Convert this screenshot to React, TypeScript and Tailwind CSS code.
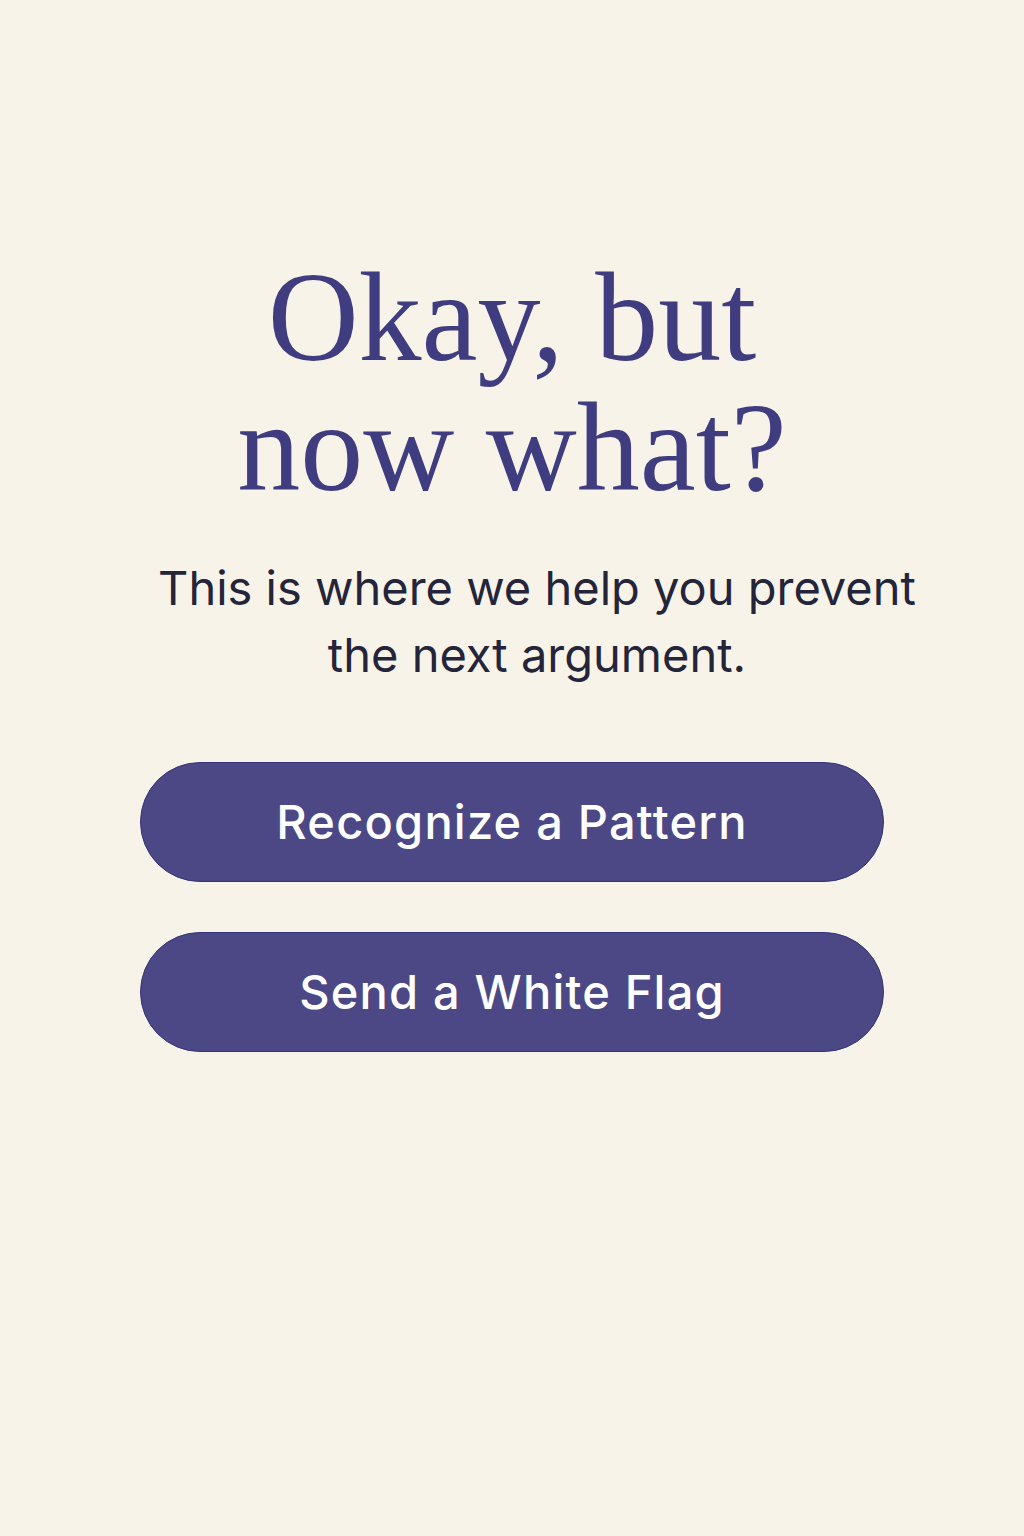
const buttonClass =
  "h-[120px] rounded-[60px] bg-[#4b4885] border border-[#35337a] text-white text-[47px] font-medium tracking-[1.2px] font-['Inter',sans-serif]";

export default function App() {
  return (
    <div className="min-h-[1536px] w-full bg-[#f8f3e8] flex flex-col items-center">
      <h1 className="mt-[253px] text-center text-[126px] leading-[130px] text-[#3f3d80] font-['Liberation_Serif',serif]">
        Okay, but
        <br />
        now what?
      </h1>

      <p className="mt-[41px] pl-[50px] text-center text-[47px] leading-[67px] text-[#24243a] font-['Inter',sans-serif]">
        This is where we help you prevent
        <br />
        the next argument.
      </p>

      <div className="mt-[74px] flex flex-col gap-[50px] w-[744px]">
        <button className={buttonClass}>Recognize a Pattern</button>
        <button className={buttonClass}>Send a White Flag</button>
      </div>
    </div>
  );
}
